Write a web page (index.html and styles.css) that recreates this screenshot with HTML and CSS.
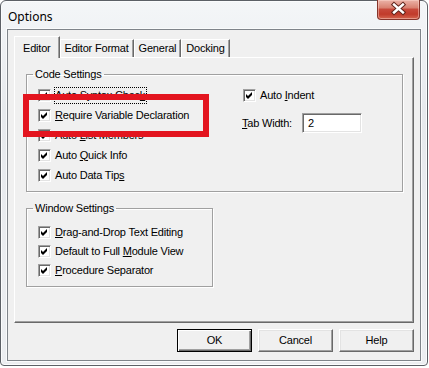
FILE: index.html
```html
<!DOCTYPE html>
<html lang="en">
<head>
    <meta charset="UTF-8">
    <title>Options</title>
    <link rel="stylesheet" href="styles.css">
</head>
<body>

<svg width="0" height="0" class="defs">
    <symbol id="chk" viewBox="0 0 11 11">
        <path d="M2 4 L4 6 L8 2 V5 L4 9 L2 7 Z" fill="#000"/>
    </symbol>
</svg>

<div class="window">
    <div class="titlebar">
        <span class="title">Options</span>
        <span class="close">
            <svg width="43" height="20" viewBox="0 0 43 20">
                <path d="M17.5 5.5 L26.5 13.5 M26.5 5.5 L17.5 13.5" stroke="#5e2119" stroke-width="4.6" stroke-linecap="square" fill="none"/>
                <path d="M17.5 5.5 L26.5 13.5 M26.5 5.5 L17.5 13.5" stroke="#fff" stroke-width="2.6" stroke-linecap="square" fill="none"/>
            </svg>
        </span>
    </div>

    <div class="client">
        <div class="tabs">
            <span class="tab active">Editor</span>
            <span class="tab">Editor Format</span>
            <span class="tab">General</span>
            <span class="tab">Docking</span>
        </div>

        <div class="panel">
            <fieldset class="group code">
                <legend>Code Settings</legend>
                <div class="cols">
                    <div class="col left">
                        <label class="check"><span class="box"><svg><use href="#chk"/></svg></span><span class="text focus">Auto Syntax Chec<u>k</u></span></label>
                        <label class="check"><span class="box"><svg><use href="#chk"/></svg></span><span class="text"><u>R</u>equire Variable Declaration</span></label>
                        <label class="check"><span class="box"><svg><use href="#chk"/></svg></span><span class="text">Auto <u>L</u>ist Members</span></label>
                        <label class="check"><span class="box"><svg><use href="#chk"/></svg></span><span class="text">Auto <u>Q</u>uick Info</span></label>
                        <label class="check"><span class="box"><svg><use href="#chk"/></svg></span><span class="text">Auto Data Tip<u>s</u></span></label>
                    </div>
                    <div class="col right">
                        <label class="check indent"><span class="box"><svg><use href="#chk"/></svg></span><span class="text">Auto <u>I</u>ndent</span></label>
                        <div class="field">
                            <span class="field-label"><u>T</u>ab Width:</span>
                            <span class="textbox">2</span>
                        </div>
                    </div>
                </div>
            </fieldset>

            <fieldset class="group window-set">
                <legend>Window Settings</legend>
                <label class="check"><span class="box"><svg><use href="#chk"/></svg></span><span class="text"><u>D</u>rag-and-Drop Text Editing</span></label>
                <label class="check"><span class="box"><svg><use href="#chk"/></svg></span><span class="text">Default to Full <u>M</u>odule View</span></label>
                <label class="check"><span class="box"><svg><use href="#chk"/></svg></span><span class="text"><u>P</u>rocedure Separator</span></label>
            </fieldset>
        </div>

        <div class="buttons">
            <span class="btn default">OK</span>
            <span class="btn">Cancel</span>
            <span class="btn">Help</span>
        </div>
    </div>

    <div class="callout"></div>
</div>

</body>
</html>
```

FILE: styles.css
```css
* {
    box-sizing: border-box;
}
body {
    margin: 0;
    background: #fff;
    font-family: "Liberation Sans", Arial, sans-serif;
    font-size: 11px;
    letter-spacing: -0.2px;
    color: #000;
}
.defs {
    position: absolute;
}
.window {
    position: relative;
    width: 428px;
    height: 366px;
    border: 1px solid #5c6066;
    border-radius: 6px 6px 4px 4px;
    background: linear-gradient(#f4f6f8, #e6e9ed 30%, #eceef1);
    box-shadow: inset 0 0 0 1px #fbfcfd;
    display: flex;
    flex-direction: column;
}
.titlebar {
    height: 28px;
    display: flex;
    justify-content: space-between;
    align-items: flex-start;
    padding-left: 7px;
}
.title {
    font-family: "Noto Sans", "Open Sans", sans-serif;
    font-size: 12px;
    letter-spacing: 0;
    line-height: 17px;
    padding-top: 7px;
}
.close {
    width: 43px;
    height: 20px;
    margin-top: -1px;
    margin-right: 7px;
    border: 1px solid #85342b;
    border-top: none;
    border-radius: 0 0 4px 4px;
    background: linear-gradient(#ebb3a8 0%, #d98272 40%, #c7483a 50%, #c13b2b 75%, #d46650 100%);
    box-shadow: inset 0 0 0 1px rgba(255, 220, 210, 0.45);
    display: flex;
}
.close svg {
    margin: -1px 0 0 -1px;
}
.client {
    margin: 0 6px 4px 6px;
    height: 332px;
    border: 1px solid #7f848a;
    box-shadow: 0 0 0 1px #fafbfc;
    background: #f0f0f0;
    padding: 6px 6px 8px 6px;
    display: flex;
    flex-direction: column;
}
.tabs {
    display: flex;
    align-items: flex-end;
    height: 21px;
    position: relative;
    z-index: 1;
}
.tab {
    height: 18px;
    line-height: 17px;
    padding: 0 4px;
    border: 1px solid #fff;
    border-bottom: none;
    border-right-color: #696969;
    box-shadow: inset -1px 0 #a0a0a0;
    background: #f0f0f0;
}
.tab.active {
    height: 22px;
    margin-bottom: -1px;
    padding: 1px 8px 0 8px;
    line-height: 20px;
}
.panel {
    height: 266px;
    border: 1px solid;
    border-color: #fff #696969 #696969 #fff;
    box-shadow: inset -1px -1px #a0a0a0;
    padding: 10px 10px 0 11px;
}
.group {
    margin: 0;
    min-width: 0;
    border: 1px solid #a0a0a0;
    box-shadow: 1px 1px 0 #fff, inset 1px 1px 0 #fff;
    padding: 4px 10px 6px 11px;
}
.group legend {
    padding: 0 2px;
    margin-left: -5px;
    line-height: 13px;
}
.code {
    width: 377px;
}
.window-set {
    width: 187px;
    margin-top: 10px;
    padding-top: 8px;
}
.cols {
    display: flex;
}
.col.left {
    width: 204px;
}
.check {
    display: flex;
    align-items: center;
    height: 20px;
}
.window-set .check {
    height: 19px;
}
.box {
    width: 13px;
    height: 13px;
    flex: none;
    background: #fff;
    border: 1px solid;
    border-color: #a0a0a0 #fff #fff #a0a0a0;
    box-shadow: inset 1px 1px #696969, inset -1px -1px #e3e3e3;
    margin-right: 3px;
}
.box svg {
    display: block;
    width: 11px;
    height: 11px;
}
.text {
    border: 1px dotted transparent;
    padding: 1px 0;
    line-height: 13px;
}
.text.focus {
    border-color: #000;
    padding-right: 1px;
}
.indent {
    margin-left: 1px;
}
.field {
    display: flex;
    align-items: center;
    margin-top: 8px;
}
.field-label {
    width: 60px;
}
.textbox {
    width: 60px;
    height: 20px;
    line-height: 18px;
    padding-left: 5px;
    background: #fff;
    border: 1px solid;
    border-color: #a0a0a0 #fff #fff #a0a0a0;
    box-shadow: inset 1px 1px #696969, inset -1px -1px #e3e3e3;
}
.buttons {
    display: flex;
    justify-content: flex-end;
    gap: 6px;
    margin-top: 6px;
}
.btn {
    width: 75px;
    height: 23px;
    line-height: 21px;
    text-align: center;
    background: #f0f0f0;
    border: 1px solid;
    border-color: #fff #696969 #696969 #fff;
    box-shadow: inset -1px -1px #a0a0a0, inset 1px 1px #e3e3e3;
}
.btn.default {
    border-color: #000;
    box-shadow: inset 1px 1px #fff, inset -1px -1px #696969, inset -2px -2px #a0a0a0;
}
.callout {
    position: absolute;
    left: 22px;
    top: 93px;
    width: 186px;
    height: 43px;
    border: 6px solid #e3151f;
}
```
